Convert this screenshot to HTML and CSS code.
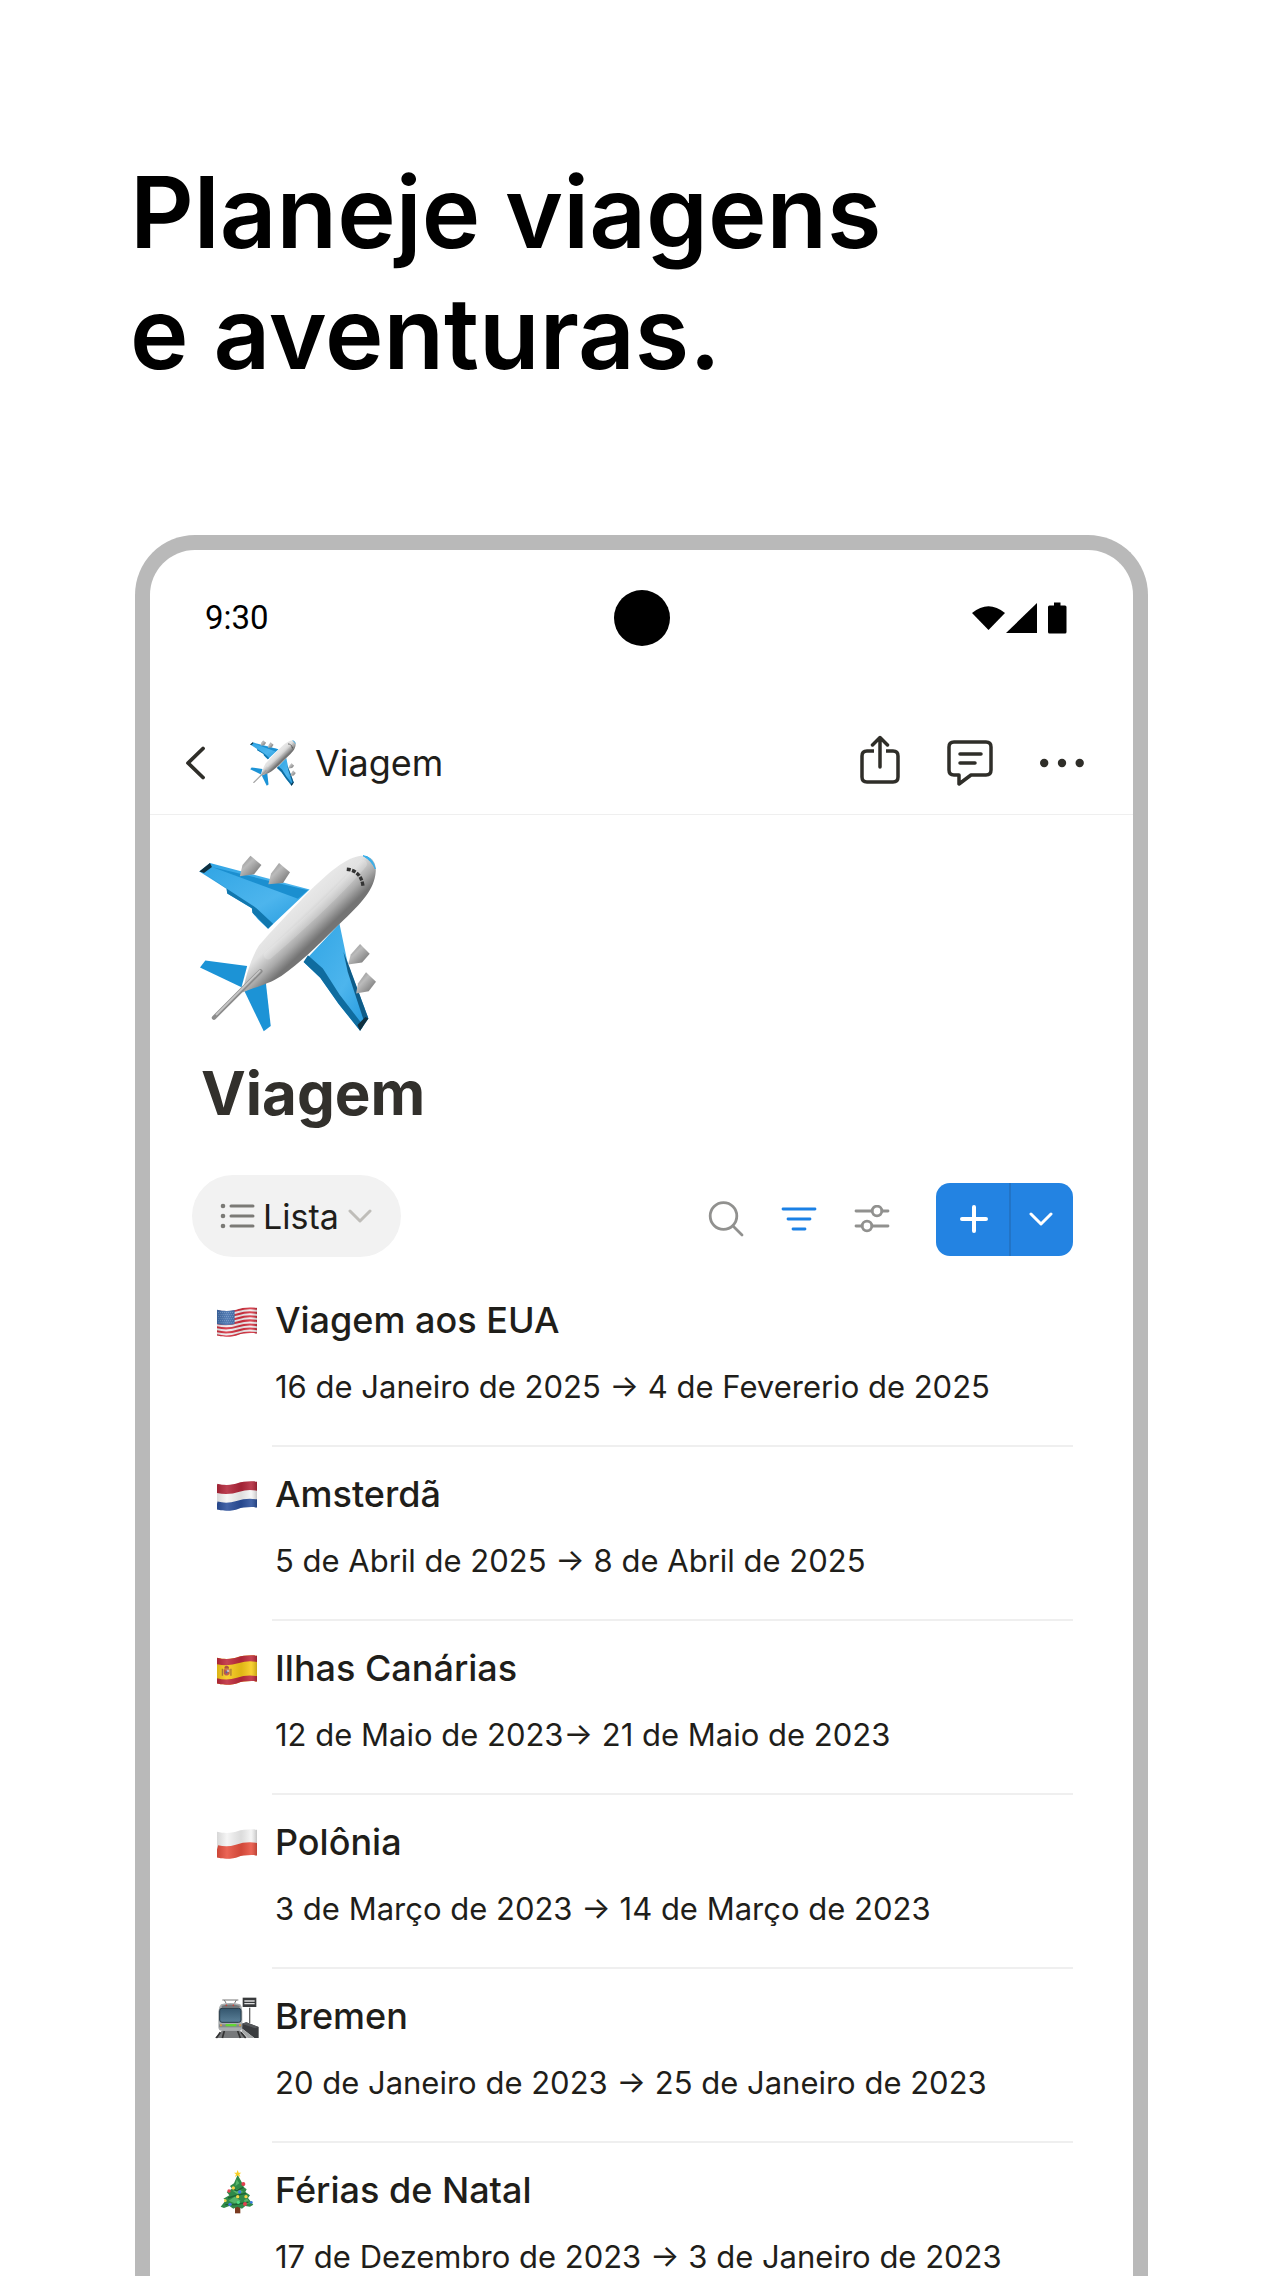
FILE: index.html
```html
<!DOCTYPE html>
<html lang="pt-BR">
<head>
<meta charset="utf-8">
<meta name="viewport" content="width=device-width, initial-scale=1">
<title>Planeje viagens e aventuras.</title>
<link rel="stylesheet" href="styles.css">
</head>
<body>
<svg class="defs" aria-hidden="true">
  <defs>
    <linearGradient id="body" gradientUnits="userSpaceOnUse" x1="285" y1="170" x2="395" y2="285">
      <stop offset="0" stop-color="#a4a4a4"/><stop offset=".25" stop-color="#e8e8e8"/><stop offset=".5" stop-color="#e2e2e2"/><stop offset=".8" stop-color="#aaa"/><stop offset="1" stop-color="#747474"/>
    </linearGradient>
    <linearGradient id="wing" x1="0" y1="0" x2="1" y2="1">
      <stop offset="0" stop-color="#2fa4e4"/><stop offset=".6" stop-color="#4db5ed"/><stop offset="1" stop-color="#1f97dc"/>
    </linearGradient>
    <linearGradient id="engine" x1="0" y1="0" x2="1" y2="1">
      <stop offset="0" stop-color="#808080"/><stop offset=".4" stop-color="#bbb"/><stop offset="1" stop-color="#666"/>
    </linearGradient>
    <linearGradient id="shade" x1="0" x2="1" y1="0" y2="0">
      <stop offset="0" stop-color="#000" stop-opacity=".12"/><stop offset=".25" stop-color="#fff" stop-opacity=".12"/><stop offset=".6" stop-color="#000" stop-opacity=".1"/><stop offset=".85" stop-color="#fff" stop-opacity=".12"/><stop offset="1" stop-color="#000" stop-opacity=".2"/>
    </linearGradient>
    <linearGradient id="glass" x1="0" y1="0" x2="0" y2="1">
      <stop offset="0" stop-color="#34566e"/><stop offset="1" stop-color="#5b8098"/>
    </linearGradient>
    <path id="wave" d="M-2 8C28 16 50 10 62 6S100-2 122 3"/>
    <clipPath id="flag"><path d="M0 8C28 15 50 10 62 6S100-1 118 2V78C100 75 74 78 62 82S28 91 0 84Z"/></clipPath>
    <symbol id="plane" viewBox="27 45 536 536">
      <path d="M60 72L360 152L235 270L205 242L188 222L186 208L112 164L110 150L28 98Z" fill="url(#wing)"/>
      <path d="M28 98L60 72L66 84L42 102Z" fill="#10303f"/>
      <path d="M42 102L110 150L112 164L186 208L188 222L235 270L250 255L200 208L120 156Z" fill="#1177ae"/>
      <path d="M66 84L325 180L355 154Z" fill="#1b8fd0"/>
      <path d="M450 255L475 375L537 540L512 577L447 496L392 418L342 370Z" fill="url(#wing)"/>
      <path d="M342 370L392 418L447 496L512 577L522 562L450 468L400 390L355 350Z" fill="#0f6c9f"/>
      <path d="M462 340L480 385L537 540L525 552L475 400Z" fill="#0e5c88"/>
      <path d="M512 577L537 540L528 536L504 560Z" fill="#10303f"/>
      <path d="M46 366L172 382L155 446L30 387Z" fill="#1c93d6"/>
      <path d="M228 430L243 563L222 579L164 458Z" fill="#1c93d6"/>
      <path d="M182 50L215 78L193 106L150 112L158 78Z" fill="url(#engine)"/>
      <path d="M268 72L301 100L280 132L236 136L244 104Z" fill="url(#engine)"/>
      <path d="M512 316L541 345L518 372L476 378L484 348Z" fill="url(#engine)"/>
      <path d="M530 401L560 430L538 458L500 465L506 434Z" fill="url(#engine)"/>
      <path d="M510 51C545 47 562 68 559 100C555 150 520 190 450 256C380 325 330 375 275 412C235 438 195 445 158 462C165 425 182 360 208 320C240 282 295 225 345 172C405 112 460 60 510 51Z" fill="url(#body)"/>
      <path d="M235 350C310 285 430 180 520 75" fill="none" stroke="#fff" stroke-width="26" stroke-linecap="round" opacity=".18"/>
      <path d="M521 50Q550 52 558 90Q548 66 521 50Z" fill="#36aeea" stroke="#36aeea" stroke-width="3"/>
      <path d="M472 91C495 93 516 105 521 142" fill="none" stroke="#333" stroke-width="10" stroke-dasharray="12 4"/>
      <path d="M72 538L212 398" stroke="#8d8d8d" stroke-width="13" stroke-linecap="round"/>
      <path d="M80 528L210 397" stroke="#c6c6c6" stroke-width="6" stroke-linecap="round"/>
    </symbol>
    <symbol id="chevron-down" viewBox="0 0 24 14">
      <path d="M2 2L12 12L22 2" fill="none" stroke="currentColor" stroke-width="3" stroke-linecap="round" stroke-linejoin="round"/>
    </symbol>
  </defs>
</svg>

<h1 class="headline">Planeje viagens<br>e aventuras.</h1>

<main class="phone">
  <div class="status">
    <span class="time">9:30</span>
    <span class="camera"></span>
    <svg class="signals" viewBox="0 0 95 32" aria-hidden="true">
      <path d="M0 11Q16.500-2.500 33 11L16.500 28Z"/>
      <path d="M34 31L65 1V31Z"/>
      <path d="M76 5Q76 3.500 77.500 3.500H82V.5H88.500V3.500H93Q94.500 3.500 94.500 5V30Q94.500 31.500 93 31.500H77.500Q76 31.500 76 30Z"/>
    </svg>
  </div>

  <nav class="appbar">
    <button class="back" aria-label="Voltar"><svg width="20" height="34" viewBox="0 0 20 34"><path d="M18 2.500L3 17L18 31.500" fill="none" stroke="currentColor" stroke-width="3.800" stroke-linecap="round" stroke-linejoin="round"/></svg></button>
    <svg class="crumb-icon" aria-hidden="true"><use href="#plane"/></svg>
    <span class="crumb">Viagem</span>
    <div class="actions">
      <button aria-label="Compartilhar"><svg width="40" height="60" viewBox="0 0 40 60" fill="none" stroke="currentColor" stroke-width="3.500" stroke-linecap="round" stroke-linejoin="round"><path d="M14 18H7Q2 18 2 23V44Q2 49 7 49H33Q38 49 38 44V23Q38 18 33 18H26" stroke-linecap="butt"/><path d="M20 34V4.500M12.500 12L20 4.500L27.500 12"/></svg></button>
      <button aria-label="Comentários"><svg width="46" height="46" viewBox="0 0 46 46" fill="none" stroke="currentColor" stroke-width="3.500" stroke-linecap="round" stroke-linejoin="round"><path d="M7 2H39Q44 2 44 7V30Q44 35 39 35H24L12 44V35H7Q2 35 2 30V7Q2 2 7 2Z"/><path d="M13 14H34M13 23H28"/></svg></button>
      <button aria-label="Mais"><svg width="44" height="10" viewBox="0 0 44 10" fill="currentColor"><circle cx="4.200" cy="5" r="4.200"/><circle cx="22" cy="5" r="4.200"/><circle cx="39.700" cy="5" r="4.200"/></svg></button>
    </div>
  </nav>

  <section class="page">
    <svg class="page-icon" aria-hidden="true"><use href="#plane"/></svg>
    <h2 class="page-title">Viagem</h2>

    <div class="toolbar">
      <button class="view">
        <svg width="35" height="28" viewBox="0 0 35 28" class="view-icon"><g fill="currentColor"><circle cx="3" cy="4" r="2.300"/><circle cx="3" cy="14" r="2.300"/><circle cx="3" cy="24" r="2.300"/></g><path d="M11 4H33M11 14H33M11 24H33" stroke="currentColor" stroke-width="3" stroke-linecap="round"/></svg>
        <span>Lista</span>
        <svg width="24" height="14" class="view-chevron"><use href="#chevron-down"/></svg>
      </button>
      <div class="tools">
        <button aria-label="Buscar"><svg width="36" height="36" viewBox="0 0 36 36" fill="none" stroke="currentColor" stroke-width="2.800" stroke-linecap="round"><circle cx="15.500" cy="15" r="13.300"/><path d="M25 25L34 34"/></svg></button>
        <button class="active" aria-label="Filtrar"><svg width="36" height="24" viewBox="0 0 36 24" stroke="currentColor" stroke-width="2.800" stroke-linecap="round"><path d="M2 2H34M7 12H29M12 22H24"/></svg></button>
        <button aria-label="Propriedades"><svg width="36" height="28" viewBox="0 0 36 28" fill="none" stroke="currentColor" stroke-width="2.800" stroke-linecap="round"><path d="M2 6H18M28 6H34M2 21H8M18 21H34"/><circle cx="23" cy="6" r="4.800"/><circle cx="13" cy="21" r="4.800"/></svg></button>
        <div class="new">
          <button class="add" aria-label="Novo"><svg width="30" height="30" viewBox="0 0 30 30" stroke="currentColor" stroke-width="4" stroke-linecap="round"><path d="M3 15H27M15 3V27"/></svg></button>
          <button class="more" aria-label="Modelos"><svg width="24" height="14"><use href="#chevron-down"/></svg></button>
        </div>
      </div>
    </div>

    <ul class="trips">
      <li>
        <svg class="flag" viewBox="0 0 118 88" role="img" aria-label="Estados Unidos"><g clip-path="url(#flag)">
          <rect width="118" height="88" fill="#f3eef0"/>
          <g fill="none" stroke="#d6303f" stroke-width="6"><use href="#wave" y="3"/><use href="#wave" y="15"/><use href="#wave" y="27"/><use href="#wave" y="39"/><use href="#wave" y="51"/><use href="#wave" y="63"/><use href="#wave" y="75"/></g>
          <path d="M0 0H52V50Q28 56 0 50Z" fill="#3f6cab"/>
          <path d="M3 16H50M5 22H50M3 28H50M5 34H50M3 40H50M5 46H50" stroke="#a9c0e0" stroke-width="2" stroke-dasharray="2 4"/>
          <rect width="118" height="88" fill="url(#shade)"/></g></svg>
        <div class="trip"><h3>Viagem aos EUA</h3><p>16 de Janeiro de 2025 → 4 de Fevererio de 2025</p></div>
      </li>
      <li>
        <svg class="flag" viewBox="0 0 118 88" role="img" aria-label="Países Baixos"><g clip-path="url(#flag)">
          <rect width="118" height="88" fill="#f6f6f6"/>
          <g fill="none" stroke-width="28"><use href="#wave" y="12" stroke="#b3263a"/><use href="#wave" y="66" stroke="#2a4f9c"/></g>
          <rect width="118" height="88" fill="url(#shade)"/></g></svg>
        <div class="trip"><h3>Amsterdã</h3><p>5 de Abril de 2025 → 8 de Abril de 2025</p></div>
      </li>
      <li>
        <svg class="flag" viewBox="0 0 118 88" role="img" aria-label="Espanha"><g clip-path="url(#flag)">
          <rect width="118" height="88" fill="#f8cb18"/>
          <g fill="none" stroke="#bf2a3b" stroke-width="20"><use href="#wave" y="8"/><use href="#wave" y="70"/></g>
          <path d="M14 40H18V61H14ZM39 40H43V61H39Z" fill="#a8722a"/>
          <path d="M20 42H37V55Q28 66 20 55Z" fill="#b84a3c"/><path d="M22 35Q28 28 35 35V40H22Z" fill="#a33f2c"/><path d="M29 43H36V50H29Z" fill="#c9b4b8"/><circle cx="28" cy="51" r="3" fill="#35569c"/>
          <rect width="118" height="88" fill="url(#shade)"/></g></svg>
        <div class="trip"><h3>Ilhas Canárias</h3><p>12 de Maio de 2023→ 21 de Maio de 2023</p></div>
      </li>
      <li>
        <svg class="flag" viewBox="0 0 118 88" role="img" aria-label="Polônia"><g clip-path="url(#flag)">
          <rect width="118" height="88" fill="#f4f4f4"/>
          <use href="#wave" y="60" fill="none" stroke="#e8503f" stroke-width="42"/>
          <rect width="118" height="88" fill="url(#shade)"/></g></svg>
        <div class="trip"><h3>Polônia</h3><p>3 de Março de 2023 → 14 de Março de 2023</p></div>
      </li>
      <li>
        <svg class="train" viewBox="0 0 132 122" role="img" aria-label="Estação">
          <path d="M22 98H74L96 121H0Z" fill="#77797b"/><path d="M16 104L4 121M28 100L22 121M68 100L76 121M78 104L92 121" stroke="#333" stroke-width="5"/>
          <path d="M80 78L94 74L131 88V121H118L80 92Z" fill="#3a3c3f"/><path d="M80 78L94 74L131 88L120 92Z" fill="#55585b"/>
          <path d="M80 92L118 121H98L80 102Z" fill="#a5a7a8"/>
          <path d="M104 30V76" stroke="#666" stroke-width="4"/><path d="M83 0H124V28H83Z" fill="#383a3c"/><path d="M88 10H119M88 18H119" stroke="#ddd" stroke-width="4"/>
          <path d="M22 7H70M28 7L34 18M64 7L58 18" fill="none" stroke="#777" stroke-width="3"/>
          <path d="M18 20Q46 12 76 20Q82 28 82 42V88Q82 99 72 99H20Q10 99 10 88V42Q10 28 18 20Z" fill="#a9adaf"/>
          <path d="M20 24Q46 17 74 24V30H20Z" fill="#74787a"/><circle cx="34" cy="23" r="2.500" fill="#d43b30"/><circle cx="55" cy="23" r="2.500" fill="#d43b30"/>
          <rect x="14" y="32" width="64" height="42" rx="7" fill="url(#glass)" stroke="#263a47" stroke-width="3"/>
          <path d="M12 80H80V89H12Z" fill="#85898b"/><path d="M32 79H64V86H32Z" fill="#62d636"/><circle cx="18" cy="83" r="3" fill="#e69a3b"/><circle cx="75" cy="83" r="3" fill="#e69a3b"/>
        </svg>
        <div class="trip"><h3>Bremen</h3><p>20 de Janeiro de 2023 → 25 de Janeiro de 2023</p></div>
      </li>
      <li>
        <svg class="tree" viewBox="0 0 102 132" role="img" aria-label="Árvore de Natal">
          <path d="M45 108H61V130H45Z" fill="#7a3a20"/>
          <path d="M53 14L66 38L76 42L70 50L80 58L76 66L90 76L84 84L100 104L90 110L76 108L66 116L52 110L40 116L28 108L12 114L2 110L18 90L10 86L28 76L20 66L36 56L30 48L42 40Z" fill="#2f8a49"/>
          <path d="M50 28L58 40L46 48ZM38 62L56 56L70 66L52 72ZM26 92L44 80L62 92L44 100ZM72 90L82 86L90 100L76 102Z" fill="#56b56a"/>
          <path d="M36 56L50 62L70 52M24 84L48 76L78 70M16 104L46 104L86 96" fill="none" stroke="#1d6234" stroke-width="4"/>
          <path d="M53 0L56 8L64 8L58 13L61 21L53 16L45 21L48 13L42 8L50 8Z" fill="#f9cf25"/>
          <g fill="#e0414f"><circle cx="70" cy="42" r="6"/><circle cx="27" cy="63" r="5"/><circle cx="75" cy="102" r="6"/></g>
          <g fill="#3d7be0"><circle cx="59" cy="66" r="5"/><circle cx="30" cy="103" r="5"/><circle cx="94" cy="97" r="4"/></g>
          <g fill="#f7d447"><circle cx="40" cy="54" r="5"/><circle cx="53" cy="80" r="5"/><circle cx="78" cy="80" r="5"/><circle cx="16" cy="92" r="4"/></g>
          <circle cx="55" cy="97" r="5" fill="#4fdc83"/>
        </svg>
        <div class="trip"><h3>Férias de Natal</h3><p>17 de Dezembro de 2023 → 3 de Janeiro de 2023</p></div>
      </li>
    </ul>
  </section>
</main>
</body>
</html>
```
FILE: styles.css
```css
* {
  box-sizing: border-box;
}

body {
  margin: 0;
  min-height: 100vh;
  display: flex;
  flex-direction: column;
  background: #fff;
  color: #1f1e1a;
  font-family: Inter, "Liberation Sans", sans-serif;
}

h1, h2, h3, p, ul {
  margin: 0;
  padding: 0;
}

button {
  display: flex;
  align-items: center;
  justify-content: center;
  padding: 0;
  border: 0;
  background: none;
  color: inherit;
  font: inherit;
}

svg {
  display: block;
  flex: none;
}

.defs {
  position: absolute;
  width: 0;
  height: 0;
}

.headline {
  padding: 152px 130px 0;
  color: #000;
  font-size: 99px;
  font-weight: 600;
  line-height: 121px;
}

.phone {
  flex: 1;
  margin: 141px 132px 0 135px;
  border: 15px solid #b9b9b9;
  border-bottom: 0;
  border-radius: 60px 60px 0 0;
}

.status {
  display: grid;
  grid-template-columns: 1fr auto 1fr;
  align-items: center;
  height: 135px;
  padding: 0 55px;
}

.time {
  color: #000;
  font-family: Roboto, sans-serif;
  font-size: 33px;
}

.camera {
  width: 56px;
  height: 56px;
  border-radius: 50%;
  background: #000;
}

.signals {
  width: 95px;
  height: 32px;
  margin-right: 11px;
  justify-self: end;
  fill: #000;
}

.appbar {
  display: flex;
  align-items: center;
  height: 130px;
  padding: 27px 49px 0 35px;
  border-bottom: 1px solid #efefef;
  color: #2f2e29;
}

.crumb-icon {
  width: 46px;
  height: 46px;
  margin-left: 45px;
}

.crumb {
  margin-left: 19px;
  color: #1f1e1a;
  font-size: 36px;
}

.actions {
  display: flex;
  align-items: center;
  gap: 47px;
  margin-left: auto;
}

.page {
  padding: 39px 60px 0 42px;
}

.page-icon {
  width: 178px;
  height: 178px;
  margin-left: 7px;
}

.page-title {
  margin: 25px 0 0 9px;
  color: #32302c;
  font-size: 60px;
  font-weight: 700;
  line-height: 72px;
}

.toolbar {
  display: flex;
  justify-content: space-between;
  margin-top: 46px;
}

.view {
  height: 82px;
  padding: 0 29px 0 28px;
  border-radius: 41px;
  background: #f2f2f2;
  font-size: 34px;
}

.view-icon {
  margin-right: 8px;
  color: #7b7a76;
}

.view-chevron {
  margin-left: 9px;
  color: #bfbdb9;
}

.tools {
  display: flex;
  align-items: center;
  gap: 37px;
  padding-top: 6px;
  color: #91918f;
}

.active {
  color: #1a80e5;
}

.new {
  display: flex;
  height: 73px;
  margin-left: 9px;
  overflow: hidden;
  border-radius: 14px;
  background: #2383e2;
  color: #fff;
}

.add {
  width: 75px;
  padding-left: 2px;
  border-right: 2px solid #2274c6;
}

.more {
  width: 62px;
  padding-right: 2px;
}

.trips {
  margin-top: 16px;
  list-style: none;
}

.trips li {
  display: grid;
  grid-template-columns: 80px 1fr;
  padding-top: 25px;
}

.flag, .train, .tree {
  height: 48px;
  justify-self: center;
  margin-left: 10px;
}

.flag {
  width: 40px;
}

.train {
  width: 44px;
}

.tree {
  width: 34px;
}

.trip {
  padding: 0 0 42px 3px;
  border-bottom: 2px solid #efefef;
}

.trips li:last-child .trip {
  padding-bottom: 0;
  border-bottom: 0;
}

.trip h3 {
  font-size: 36px;
  font-weight: 500;
  line-height: 44px;
}

.trip p {
  margin-top: 29px;
  font-size: 31px;
  line-height: 32px;
}
```
